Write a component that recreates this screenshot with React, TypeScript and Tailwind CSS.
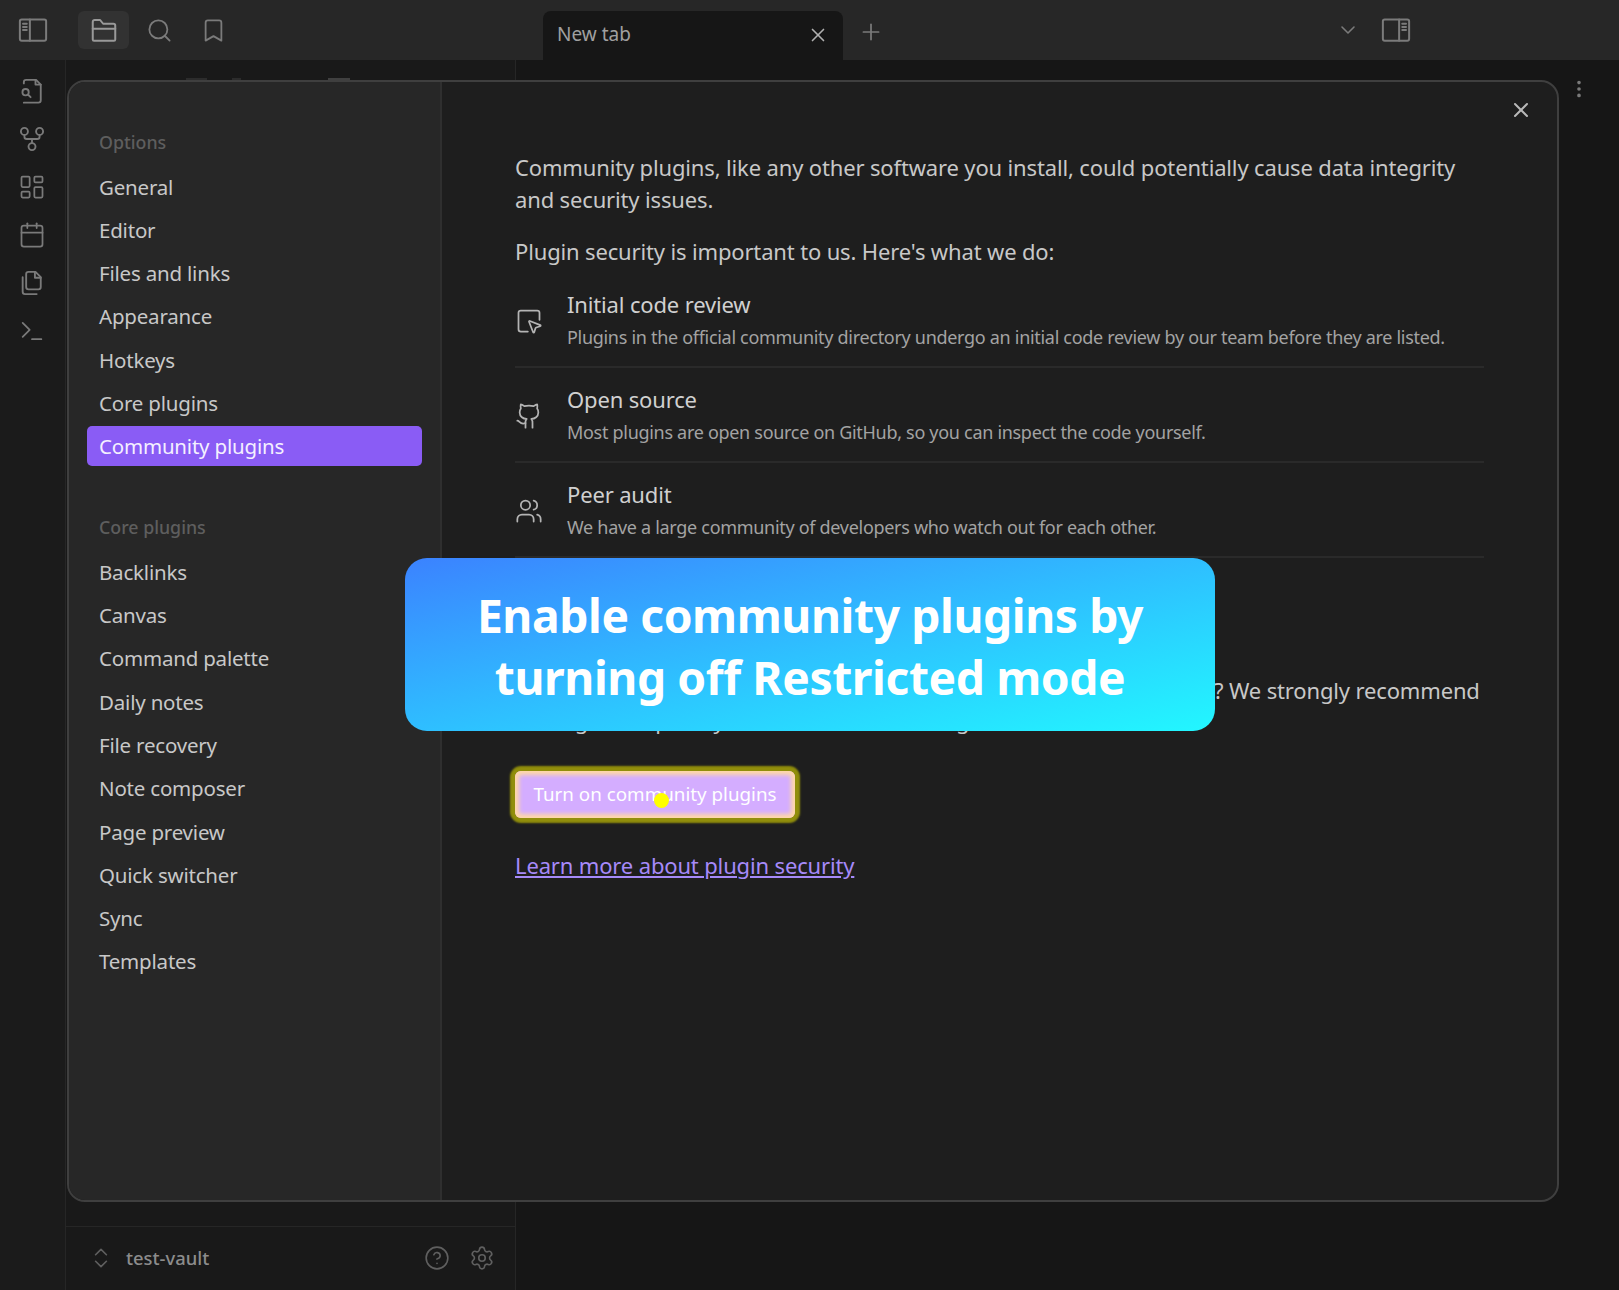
import {
  Bookmark,
  Calendar,
  ChevronDown,
  ChevronsUpDown,
  CircleHelp,
  Github,
  LayoutDashboard,
  MoreVertical,
  Plus,
  Search,
  Settings,
  SquareMousePointer,
  Terminal,
  Users,
  X,
} from "lucide-react";
import type { ReactNode } from "react";

const optionItems = ["General", "Editor", "Files and links", "Appearance", "Hotkeys", "Core plugins", "Community plugins"];
const coreItems = [
  "Backlinks",
  "Canvas",
  "Command palette",
  "Daily notes",
  "File recovery",
  "Note composer",
  "Page preview",
  "Quick switcher",
  "Sync",
  "Templates",
];

const Svg = ({ children, size = 28 }: { children: ReactNode; size?: number }) => (
  <svg width={size} height={size} viewBox="0 0 24 24" fill="none" stroke="currentColor" strokeWidth="1.6" strokeLinecap="round" strokeLinejoin="round">
    {children}
  </svg>
);

const SidebarLeftIcon = () => (
  <Svg size={30}>
    <rect x="1.5" y="3.5" width="21" height="17" rx="1.5" />
    <path d="M9.5 3.5v17M4 7h3M4 9.5h3M4 12h3" />
  </Svg>
);

const SidebarRightIcon = () => (
  <Svg size={30}>
    <rect x="1.5" y="3.5" width="21" height="17" rx="1.5" />
    <path d="M14.5 3.5v17M17 7h3M17 9.5h3M17 12h3" />
  </Svg>
);

const FolderIcon = () => (
  <Svg size={30}>
    <path d="M3 19.5V5.5a1.5 1.5 0 0 1 1.5-1.5h4.4l2.4 3h8.2A1.5 1.5 0 0 1 21 8.5v11a1 1 0 0 1-1 1H4a1 1 0 0 1-1-1z" />
    <path d="M3 11h18" />
  </Svg>
);

const FileSearchIcon = () => (
  <Svg>
    <path d="M5 5.5V4.5A2 2 0 0 1 7 2.5h8.5l4 4v13.5a2 2 0 0 1-2 2H5" />
    <path d="M15 2.5v4h4.5" />
    <circle cx="6.5" cy="13" r="2.7" />
    <path d="M8.7 15.2 10.8 17.3" />
  </Svg>
);

const GraphIcon = () => (
  <Svg>
    <circle cx="5.5" cy="5.5" r="3" />
    <circle cx="18.5" cy="5.5" r="3" />
    <circle cx="12" cy="18.5" r="3" />
    <path d="M5.5 8.5v1.5a2 2 0 0 0 2 2h9a2 2 0 0 0 2-2V8.5M12 12v3.5" />
  </Svg>
);

const PagesIcon = () => (
  <Svg>
    <path d="M9 2.5h6l4.5 4.5v8.5a2 2 0 0 1-2 2H9a2 2 0 0 1-2-2v-11a2 2 0 0 1 2-2z" />
    <path d="M14.5 2.5v5h5" />
    <path d="M4 7v12.5a2 2 0 0 0 2 2h10" />
  </Svg>
);

const Feature = ({ icon, title, text }: { icon: ReactNode; title: string; text: string }) => (
  <div className="flex items-center h-[95px] pt-[2px] border-b-2 border-[#2a2a2a]">
    <div className="w-[52px] text-[#b4b4b4] shrink-0">{icon}</div>
    <div className="flex flex-col">
      <div className="mb-[1px] text-[22px] leading-[32px] text-[#d0d0d0] tracking-[-0.15px]">{title}</div>
      <div className="text-[18px] leading-[32px] text-[#a3a3a3] tracking-[-0.3px] whitespace-nowrap">{text}</div>
    </div>
  </div>
);

export default function App() {
  return (
    <div className="relative w-[1619px] h-[1290px] overflow-hidden flex flex-col bg-[#161616] font-['Noto_Sans',sans-serif] text-[#c8c8c8]">
      {/* title bar */}
      <div className="h-[60px] shrink-0 bg-[#272727] flex items-start text-[#7b7b7b]">
        <div className="w-[66px] h-[60px] flex items-center justify-center"><SidebarLeftIcon /></div>
        <div className="ml-[12px] mt-[11px] w-[51px] h-[38px] rounded-md bg-[#323232] flex items-center justify-center text-[#999]"><FolderIcon /></div>
        <div className="ml-[5px] w-[51px] h-[60px] flex items-center justify-center"><Search size={27} strokeWidth={1.6} /></div>
        <div className="ml-[3px] w-[51px] h-[60px] flex items-center justify-center"><Bookmark size={27} strokeWidth={1.6} /></div>
        <div className="ml-[304px] mt-[11px] w-[300px] h-[49px] rounded-t-lg bg-[#161616] flex items-center pl-[14px] pr-[14px] pb-[2px] justify-between">
          <span className="text-[19px] text-[#a0a0a0]">New tab</span>
          <X size={22} strokeWidth={1.8} className="text-[#b0b0b0]" />
        </div>
        <div className="ml-[15px] mt-[2px] h-[60px] flex items-center"><Plus size={26} strokeWidth={1.6} /></div>
        <div className="ml-[452px] h-[60px] flex items-center"><ChevronDown size={24} strokeWidth={1.6} /></div>
        <div className="ml-[21px] h-[60px] flex items-center"><SidebarRightIcon /></div>
      </div>

      <div className="flex flex-1 min-h-0">
        {/* ribbon */}
        <div className="w-[66px] shrink-0 bg-[#1b1b1b] border-r border-[#262626] pt-[17px] pr-[2px] flex flex-col items-center gap-[20px] text-[#7a7a7a]">
          <FileSearchIcon />
          <GraphIcon />
          <LayoutDashboard size={28} strokeWidth={1.5} />
          <Calendar size={28} strokeWidth={1.5} />
          <PagesIcon />
          <Terminal size={28} strokeWidth={1.5} />
        </div>
        {/* file pane */}
        <div className="w-[450px] shrink-0 bg-[#191919] border-r border-[#262626] flex flex-col justify-between">
          <div className="mt-[18px] h-[3px] flex pl-[120px]">
            <div className="w-[21px] bg-[#2c2c2c]" />
            <div className="ml-[25px] w-[9px] bg-[#2c2c2c]" />
            <div className="ml-[87px] w-[22px] bg-[#404040]" />
          </div>
          <div className="h-[64px] pb-[2px] border-t border-[#262626] flex items-center pl-[22px] pr-[20px] text-[#5f5f5f]">
            <ChevronsUpDown size={26} strokeWidth={1.5} />
            <span className="ml-[12px] text-[18.4px] font-medium text-[#8c8c8c]">test-vault</span>
            <CircleHelp size={26} strokeWidth={1.5} className="ml-auto" />
            <Settings size={26} strokeWidth={1.5} className="ml-[19px]" />
          </div>
        </div>
        {/* editor */}
        <div className="flex-1 flex justify-end pt-[18px] pr-[29px] text-[#7a7a7a]">
          <MoreVertical size={22} strokeWidth={2} />
        </div>
      </div>

      {/* settings modal */}
      <div className="absolute left-[67px] top-[80px] w-[1492px] h-[1122px] rounded-[18px] border-2 border-[#3f3f3f] bg-[#1e1e1e] flex overflow-hidden">
        <div className="w-[373px] shrink-0 bg-[#272727] border-r-2 border-[#2f2f2f] pt-[48px] px-[18px]">
          <div className="pl-[12px] text-[17.8px] leading-[24px] text-[#5e5e5e] font-medium">Options</div>
          <div className="mt-[11.5px] flex flex-col">
            {optionItems.map((item) => (
              <div
                key={item}
                className={
                  item === "Community plugins"
                    ? "h-[40px] mt-[0.5px] pl-[12px] rounded-[5px] bg-[#8a5cf5] text-[#f4f0ff] text-[20.5px] leading-[41px] -tracking-[0.2px]"
                    : "h-[43.3px] pl-[12px] text-[20.5px] leading-[43px] -tracking-[0.2px]"
                }
              >
                {item}
              </div>
            ))}
          </div>
          <div className="mt-[49px] pl-[12px] text-[17.8px] leading-[24px] text-[#5e5e5e] font-medium">Core plugins</div>
          <div className="mt-[12px] flex flex-col">
            {coreItems.map((item) => (
              <div key={item} className="h-[43.3px] pl-[12px] text-[20.5px] leading-[43px] -tracking-[0.2px]">
                {item}
              </div>
            ))}
          </div>
        </div>
        <div className="relative flex-1 pl-[73px] pr-[73px] pt-[69px]">
          <X size={24} strokeWidth={2} className="absolute top-[16px] right-[24px] text-[#b8b8b8]" />
          <p className="text-[22px] leading-[32px] tracking-[-0.15px]">
            Community plugins, like any other software you install, could potentially cause data integrity
            <br />
            and security issues.
          </p>
          <p className="mt-[20px] text-[22px] leading-[32px] tracking-[-0.15px]">Plugin security is important to us. Here's what we do:</p>
          <div className="mt-[6px]">
            <Feature
              icon={<SquareMousePointer size={28} strokeWidth={1.5} />}
              title="Initial code review"
              text="Plugins in the official community directory undergo an initial code review by our team before they are listed."
            />
            <Feature
              icon={<Github size={28} strokeWidth={1.5} />}
              title="Open source"
              text="Most plugins are open source on GitHub, so you can inspect the code yourself."
            />
            <Feature
              icon={<Users size={28} strokeWidth={1.5} />}
              title="Peer audit"
              text="We have a large community of developers who watch out for each other."
            />
          </div>
          <p className="mt-[116px] text-[22px] leading-[32px] tracking-[-0.15px] whitespace-nowrap">
            <span className="pl-[699px]">? We strongly recommend</span>
          </p>
          <p className="-mt-[2px] text-[22px] leading-[32px] tracking-[-0.15px] whitespace-nowrap">Adding these parts you trust and still know good ones.</p>
          <button className="relative block mt-[35px] w-[280px] h-[47px] rounded-[6px] bg-[#d4adff] text-white text-[18.8px] shadow-[0_0_2px_5px_#918e0b,inset_0_0_4px_4px_#ffd9a6]">
            Turn on community plugins
            <span className="absolute left-[139px] top-[22px] w-[15px] h-[15px] rounded-full bg-[#ffff00]" />
          </button>
          <div className="mt-[31px] text-[22px] leading-[32px] tracking-[-0.15px] text-[#a68af9] underline">Learn more about plugin security</div>
        </div>
      </div>

      {/* callout banner */}
      <div className="absolute left-[405px] top-[558px] w-[810px] h-[173px] pt-[5px] rounded-[22px] bg-gradient-to-br from-[#3b82ff] to-[#22f7ff] flex items-center justify-center text-center text-white text-[46.2px] leading-[62px] font-bold tracking-[-0.4px]">
        <div>
          Enable community plugins by
          <br />
          turning off Restricted mode
        </div>
      </div>
    </div>
  );
}
